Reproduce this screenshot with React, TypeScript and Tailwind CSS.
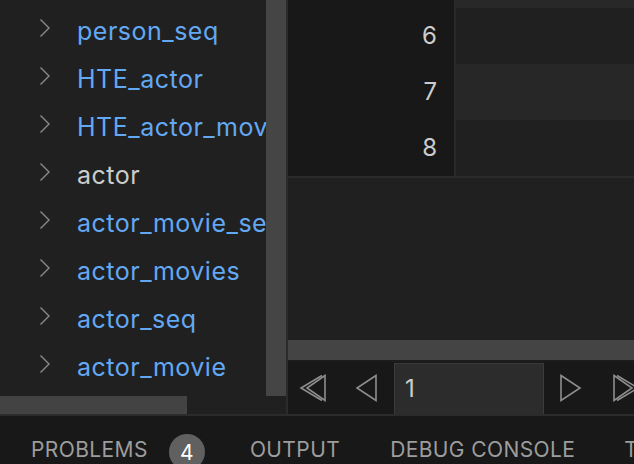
import React from "react";

const TABLES: { name: string; active?: boolean }[] = [
  { name: "person_seq" },
  { name: "HTE_actor" },
  { name: "HTE_actor_movie" },
  { name: "actor", active: true },
  { name: "actor_movie_seq" },
  { name: "actor_movies" },
  { name: "actor_seq" },
  { name: "actor_movie" },
];

const ROWS = [6, 7, 8];

function Chevron() {
  return (
    <svg width="12" height="20" viewBox="0 0 12 20" className="shrink-0 -mt-[8px]">
      <path d="M1.5 1.5 L10 10 L1.5 18.5" fill="none" stroke="#8a8a8a" strokeWidth="1.4" />
    </svg>
  );
}

function TreeRow({ name, active }: { name: string; active?: boolean }) {
  return (
    <div className="flex h-[48px] items-center whitespace-nowrap">
      <div className="w-[77px] shrink-0 flex justify-start pl-[39px]">
        <Chevron />
      </div>
      <span className={`shrink-0 text-[25px] tracking-[0.5px] ${active ? "text-[#cccccc]" : "text-[#63a8f3]"}`}>
        {name}
      </span>
    </div>
  );
}

function PagerIcon({ kind }: { kind: "first" | "prev" | "next" | "last" }) {
  const s = { fill: "none", stroke: "#8e8e8e", strokeWidth: 1.6, strokeLinejoin: "miter" as const };
  return (
    <svg width="28" height="28" viewBox="0 0 28 28" className="shrink-0">
      {kind === "first" && (
        <>
          <path d="M26 1.5 L8 14 L26 26.5 Z" {...s} />
          <path d="M23 1.5 L2 14 L23 26.5" {...s} />
        </>
      )}
      {kind === "prev" && <path d="M23 1.5 L4 14 L23 26.5 Z" {...s} />}
      {kind === "next" && <path d="M5 1.5 L24 14 L5 26.5 Z" {...s} />}
      {kind === "last" && (
        <>
          <path d="M2 1.5 L20 14 L2 26.5 Z" {...s} />
          <path d="M5 1.5 L26 14 L5 26.5" {...s} />
        </>
      )}
    </svg>
  );
}

export default function App() {
  return (
    <div
      className="w-[634px] h-[464px] overflow-hidden bg-[#181818] flex flex-col"
      style={{ fontFamily: "Inter, 'Noto Sans', sans-serif" }}
    >
      <div className="flex h-[414px]">
        {/* Sidebar */}
        <div className="w-[286px] shrink-0 flex flex-col bg-[#202020]">
          <div className="flex h-[396px]">
            <div className="w-[266px] shrink-0 overflow-hidden pt-[8px]">
              {TABLES.map((t) => (
                <TreeRow key={t.name} name={t.name} active={t.active} />
              ))}
            </div>
            <div className="w-[20px] shrink-0 bg-[#454545]" />
          </div>
          <div className="h-[18px] flex">
            <div className="w-[187px] bg-[#434343]" />
          </div>
        </div>
        <div className="w-[2px] shrink-0 bg-[#2b2b2b]" />

        {/* Results grid */}
        <div className="flex-1 flex flex-col min-w-0 overflow-hidden">
          <div className="h-[176px] flex">
            <div className="w-[166px] shrink-0 bg-[#181818] pt-[8px]">
              {ROWS.map((n) => (
                <div key={n} className="h-[56px] flex items-center justify-end pr-[17px] text-[24px] text-[#cccccc]">
                  {n}
                </div>
              ))}
            </div>
            <div className="w-[2px] shrink-0 bg-[#2a2a2a]" />
            <div className="flex-1 flex flex-col">
              <div className="h-[8px] bg-[#282828]" />
              {ROWS.map((n, i) => (
                <div key={n} className={`h-[56px] ${i % 2 === 1 ? "bg-[#272727]" : "bg-[#202020]"}`} />
              ))}
            </div>
          </div>
          <div className="h-[2px] bg-[#2b2b2b]" />
          <div className="flex-1 bg-[#202020]" />
          <div className="h-[20px] bg-[#444444]" />
          <div className="h-[2px] bg-[#1c1c1c]" />
          <div className="h-[52px] bg-[#181818] flex items-center">
            <div className="ml-[11px] shrink-0">
              <PagerIcon kind="first" />
            </div>
            <div className="ml-[26px] shrink-0">
              <PagerIcon kind="prev" />
            </div>
            <div className="ml-[13px] shrink-0 self-end w-[150px] h-[51px] bg-[#2c2c2c] border border-[#3b3b3b] border-b-0 flex items-center pl-[10px] text-[24px] text-[#cccccc]">
              1
            </div>
            <div className="ml-[12px] shrink-0">
              <PagerIcon kind="next" />
            </div>
            <div className="ml-[28px] shrink-0">
              <PagerIcon kind="last" />
            </div>
          </div>
        </div>
      </div>
      <div className="h-[2px] bg-[#2b2b2b]" />

      {/* Bottom panel tabs */}
      <div className="flex-1 flex items-end whitespace-nowrap text-[21px] tracking-[0.4px] text-[#9d9d9d] pb-[2px] pl-[31px] overflow-hidden">
        <span className="shrink-0 leading-none mb-[2px]">PROBLEMS</span>
        <span className="shrink-0 ml-[21px] w-[36px] h-[36px] rounded-full bg-[#606060] text-white flex items-center justify-center -mb-[8px] leading-none">
          4
        </span>
        <span className="shrink-0 ml-[45px] leading-none mb-[2px]">OUTPUT</span>
        <span className="shrink-0 ml-[50px] leading-none mb-[2px]">DEBUG CONSOLE</span>
        <span className="shrink-0 ml-[49px] leading-none mb-[2px]">TERMINAL</span>
      </div>
    </div>
  );
}
